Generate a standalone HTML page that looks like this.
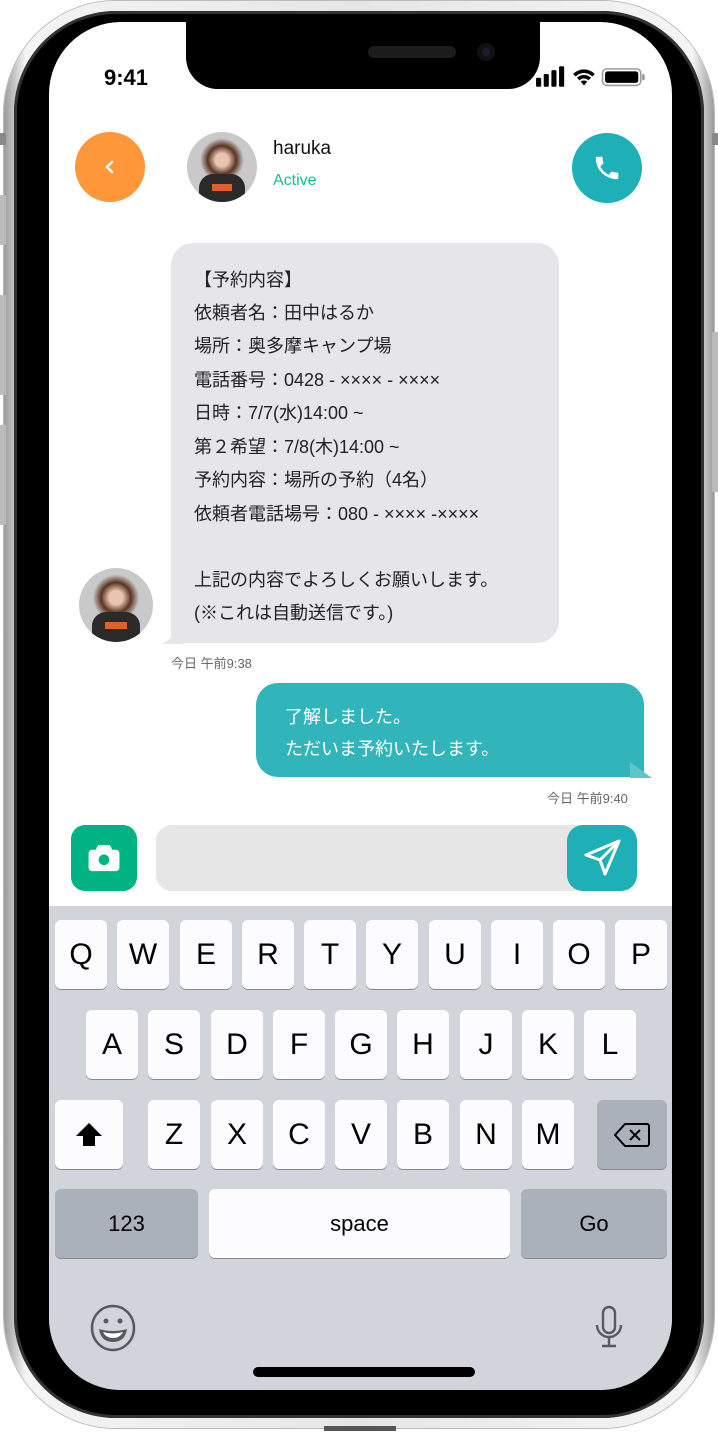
<!DOCTYPE html>
<html><head><meta charset="utf-8"><style>
*{margin:0;padding:0;box-sizing:border-box}
body{width:718px;height:1433px;background:#fff;position:relative;overflow:hidden;font-family:"Liberation Sans","Noto Sans CJK JP",sans-serif}
.abs{position:absolute}
.frame{left:4px;top:1px;width:710px;height:1427px;border-radius:112px;background:linear-gradient(90deg,#9a9a9a,#f4f4f4 3%,#e6e6e6 50%,#f4f4f4 97%,#9a9a9a);box-shadow:0 0 0 1px #bbb}
.bez{left:14px;top:11px;width:690px;height:1407px;border-radius:102px;background:#000;box-shadow:inset 0 0 0 3px #333}
.screen{left:49px;top:22px;width:623px;height:1368px;border-radius:72px;background:#fff;overflow:hidden}
.notch{left:137px;top:-2px;width:354px;height:69px;background:#000;border-radius:0 0 32px 32px}
.key{position:absolute;background:#fcfcfe;border-radius:6px;box-shadow:0 1px 0 #898a8d;font-size:30px;color:#000;display:flex;align-items:center;justify-content:center;height:69px}
.dk{background:#abb1ba}
.t{font-size:18px;color:#222;position:absolute;left:194px}
</style></head><body>
<div class="abs frame"></div>
<div class="abs" style="left:0;top:133px;width:6px;height:12px;background:#888"></div>
<div class="abs" style="left:0;top:195px;width:6px;height:50px;background:#bbb"></div>
<div class="abs" style="left:0;top:295px;width:6px;height:100px;background:#bbb"></div>
<div class="abs" style="left:0;top:425px;width:6px;height:100px;background:#bbb"></div>
<div class="abs" style="right:0;top:133px;width:6px;height:12px;background:#888"></div>
<div class="abs" style="right:0;top:332px;width:6px;height:160px;background:#bbb"></div>
<div class="abs bez"></div>
<div class="abs screen">
  <div class="abs notch">
    <div class="abs" style="left:182px;top:26px;width:88px;height:12px;border-radius:6px;background:#1c1c1e"></div>
    <div class="abs" style="left:291px;top:23px;width:18px;height:18px;border-radius:50%;background:#1a1f2e;box-shadow:inset 0 0 0 5px #111"></div>
  </div>
  <div class="abs" style="left:55px;top:43px;font-size:22px;font-weight:bold;color:#000">9:41</div>
  <svg class="abs" style="left:487px;top:43px" width="110" height="23" viewBox="0 0 86 18">
    <rect x="0" y="10" width="4" height="7" rx="1"/><rect x="6" y="7" width="4" height="10" rx="1"/><rect x="12" y="4" width="4" height="13" rx="1"/><rect x="18" y="1" width="4" height="16" rx="1"/>
    <path d="M29 7a12 12 0 0 1 17 0l-2 2a9 9 0 0 0-13 0zM32 10a8 8 0 0 1 11 0l-2 2a5 5 0 0 0-7 0zM35 13a4 4 0 0 1 5 0l-2.5 3z"/>
    <rect x="52" y="3" width="30" height="13" rx="3.5" fill="none" stroke="#999" stroke-width="1.2"/><rect x="54" y="5" width="26" height="9" rx="2"/><rect x="83" y="7" width="2" height="5" rx="1" fill="#999"/>
  </svg>
  <div class="abs" style="left:26px;top:110px;width:70px;height:70px;border-radius:50%;background:#fe963a"></div>
  <svg class="abs" style="left:53px;top:137px" width="16" height="16"><path d="M10 3L5 8l5 5" stroke="#fff" stroke-width="2.5" fill="none" stroke-linecap="round"/></svg>
  <div class="abs" style="left:138px;top:110px;width:70px;height:70px;border-radius:50%;background:radial-gradient(circle at 50% 40%,#e8c5b0 12%,#5a3322 26%,#c9c9c9 40%);overflow:hidden"><div class="abs" style="left:12px;top:42px;width:46px;height:30px;border-radius:14px 14px 0 0;background:#2a2a2a"></div><div class="abs" style="left:25px;top:52px;width:20px;height:7px;background:#e0602a"></div></div>
  <div class="abs" style="left:224px;top:116px;font-size:19px;color:#111">haruka</div>
  <div class="abs" style="left:224px;top:150px;font-size:16px;color:#14c08f">Active</div>
  <div class="abs" style="left:523px;top:111px;width:70px;height:70px;border-radius:50%;background:#1eb0b6"></div>
  <svg class="abs" style="left:543px;top:131px" width="30" height="30" viewBox="0 0 24 24"><path fill="#fff" d="M6.6 10.8a15.2 15.2 0 0 0 6.6 6.6l2.2-2.2c.3-.3.7-.4 1-.2 1.1.4 2.3.6 3.6.6.6 0 1 .4 1 1V20c0 .6-.4 1-1 1A17 17 0 0 1 3 4c0-.6.4-1 1-1h3.5c.6 0 1 .4 1 1 0 1.3.2 2.5.6 3.6.1.3 0 .7-.2 1z"/></svg>
  <div class="abs" style="left:122px;top:221px;width:388px;height:400px;border-radius:22px 22px 22px 6px;background:#e5e5ea"></div>
  <div class="abs" style="left:114px;top:606px;width:20px;height:16px;background:#e5e5ea;clip-path:polygon(100% 0,100% 100%,0 100%)"></div>
  <div class="abs" style="left:30px;top:546px;width:74px;height:74px;border-radius:50%;background:radial-gradient(circle at 50% 40%,#e8c5b0 12%,#5a3322 26%,#c9c9c9 40%);overflow:hidden"><div class="abs" style="left:13px;top:44px;width:48px;height:32px;border-radius:14px 14px 0 0;background:#2a2a2a"></div><div class="abs" style="left:26px;top:54px;width:22px;height:7px;background:#e0602a"></div></div>
</div>
<div class="t" style="left:194px;top:266px">【予約内容】</div>
<div class="t" style="top:299px">依頼者名：田中はるか</div>
<div class="t" style="top:332px">場所：奥多摩キャンプ場</div>
<div class="t" style="top:366px">電話番号：0428 - ×××× - ××××</div>
<div class="t" style="top:399px">日時：7/7(水)14:00 ~</div>
<div class="t" style="top:433px">第２希望：7/8(木)14:00 ~</div>
<div class="t" style="top:466px">予約内容：場所の予約（4名）</div>
<div class="t" style="top:500px">依頼者電話場号：080 - ×××× -××××</div>
<div class="t" style="top:566px">上記の内容でよろしくお願いします。</div>
<div class="t" style="top:599px">(※これは自動送信です。)</div>
<div class="abs" style="left:171px;top:653px;font-size:13px;color:#666">今日 午前9:38</div>
<div class="abs" style="left:256px;top:683px;width:388px;height:94px;border-radius:22px 22px 6px 22px;background:#31b5bb"></div>
<div class="abs" style="left:630px;top:762px;width:22px;height:16px;background:#5cc6cb;clip-path:polygon(0 0,0 100%,100% 100%)"></div>
<div class="abs" style="left:285px;top:701px;font-size:18px;color:#fff;line-height:32px">了解しました。<br>ただいま予約いたします。</div>
<div class="abs" style="left:547px;top:788px;font-size:13px;color:#666">今日 午前9:40</div>
<div class="abs" style="left:71px;top:825px;width:66px;height:66px;border-radius:14px;background:#00b383"></div>
<svg class="abs" style="left:85px;top:839px" width="38" height="38" viewBox="0 0 32 32"><path fill="#fff" d="M11 5h10l2 4h3a3 3 0 0 1 3 3v12a3 3 0 0 1-3 3H6a3 3 0 0 1-3-3V12a3 3 0 0 1 3-3h3z"/><circle cx="16" cy="17.5" r="4.5" fill="#00b383"/></svg>
<div class="abs" style="left:156px;top:825px;width:480px;height:66px;border-radius:16px;background:#e6e6e6"></div>
<div class="abs" style="left:567px;top:825px;width:70px;height:66px;border-radius:16px;background:#1eb0b6"></div>
<svg class="abs" style="left:583px;top:838px" width="40" height="40" viewBox="0 0 40 40"><path d="M36 3L3 17l14 5 5 14z M17 22L36 3" fill="none" stroke="#fff" stroke-width="3" stroke-linejoin="round"/></svg>
<div class="abs" style="left:49px;top:906px;width:623px;height:484px;background:#d1d5db;border-radius:0 0 72px 72px"></div>
<div class="key" style="left:55px;top:920px;width:52px">Q</div>
<div class="key" style="left:117px;top:920px;width:52px">W</div>
<div class="key" style="left:180px;top:920px;width:52px">E</div>
<div class="key" style="left:242px;top:920px;width:52px">R</div>
<div class="key" style="left:304px;top:920px;width:52px">T</div>
<div class="key" style="left:366px;top:920px;width:52px">Y</div>
<div class="key" style="left:429px;top:920px;width:52px">U</div>
<div class="key" style="left:491px;top:920px;width:52px">I</div>
<div class="key" style="left:553px;top:920px;width:52px">O</div>
<div class="key" style="left:615px;top:920px;width:52px">P</div>
<div class="key" style="left:86px;top:1010px;width:52px">A</div>
<div class="key" style="left:148px;top:1010px;width:52px">S</div>
<div class="key" style="left:211px;top:1010px;width:52px">D</div>
<div class="key" style="left:273px;top:1010px;width:52px">F</div>
<div class="key" style="left:335px;top:1010px;width:52px">G</div>
<div class="key" style="left:397px;top:1010px;width:52px">H</div>
<div class="key" style="left:460px;top:1010px;width:52px">J</div>
<div class="key" style="left:522px;top:1010px;width:52px">K</div>
<div class="key" style="left:584px;top:1010px;width:52px">L</div>
<div class="key" style="left:55px;top:1100px;width:68px"><svg width="30" height="28" viewBox="0 0 30 28"><path d="M15 2L2 15h7v10h12V15h7z"/></svg></div>
<div class="key" style="left:148px;top:1100px;width:52px">Z</div>
<div class="key" style="left:211px;top:1100px;width:52px">X</div>
<div class="key" style="left:273px;top:1100px;width:52px">C</div>
<div class="key" style="left:335px;top:1100px;width:52px">V</div>
<div class="key" style="left:397px;top:1100px;width:52px">B</div>
<div class="key" style="left:460px;top:1100px;width:52px">N</div>
<div class="key" style="left:522px;top:1100px;width:52px">M</div>
<div class="key dk" style="left:597px;top:1100px;width:70px"><svg width="38" height="28" viewBox="0 0 38 28"><path d="M12 3h22a2 2 0 0 1 2 2v18a2 2 0 0 1-2 2H12L2 14z" fill="none" stroke="#000" stroke-width="2" stroke-linejoin="round"/><path d="M17 9l10 10M27 9L17 19" stroke="#000" stroke-width="2"/></svg></div>
<div class="key dk" style="left:55px;top:1189px;width:143px;font-size:22px">123</div>
<div class="key" style="left:209px;top:1189px;width:301px;font-size:22px">space</div>
<div class="key dk" style="left:521px;top:1189px;width:146px;font-size:22px">Go</div>
<svg class="abs" style="left:89px;top:1304px" width="48" height="48" viewBox="0 0 48 48"><ellipse cx="24" cy="24" rx="21" ry="22" fill="none" stroke="#555a61" stroke-width="2.5"/><circle cx="17" cy="17" r="2.5" fill="#555a61"/><circle cx="31" cy="17" r="2.5" fill="#555a61"/><path d="M10 25q14 4 28 0q-2 13-14 13T10 25z" fill="#555a61"/><path d="M14 28q10 3 20 0q-3 6-10 6t-10-6z" fill="#fff"/></svg>
<svg class="abs" style="left:594px;top:1305px" width="30" height="44" viewBox="0 0 30 44"><rect x="9" y="2" width="12" height="26" rx="6" fill="none" stroke="#555a61" stroke-width="2.4"/><path d="M3 20a12 12 0 0 0 24 0M15 32v8M8 41h14" fill="none" stroke="#555a61" stroke-width="2.4"/></svg>
<div class="abs" style="left:253px;top:1367px;width:222px;height:10px;border-radius:5px;background:#000"></div>
<div class="abs" style="left:324px;top:1426px;width:72px;height:5px;background:#555"></div>
</body></html>
